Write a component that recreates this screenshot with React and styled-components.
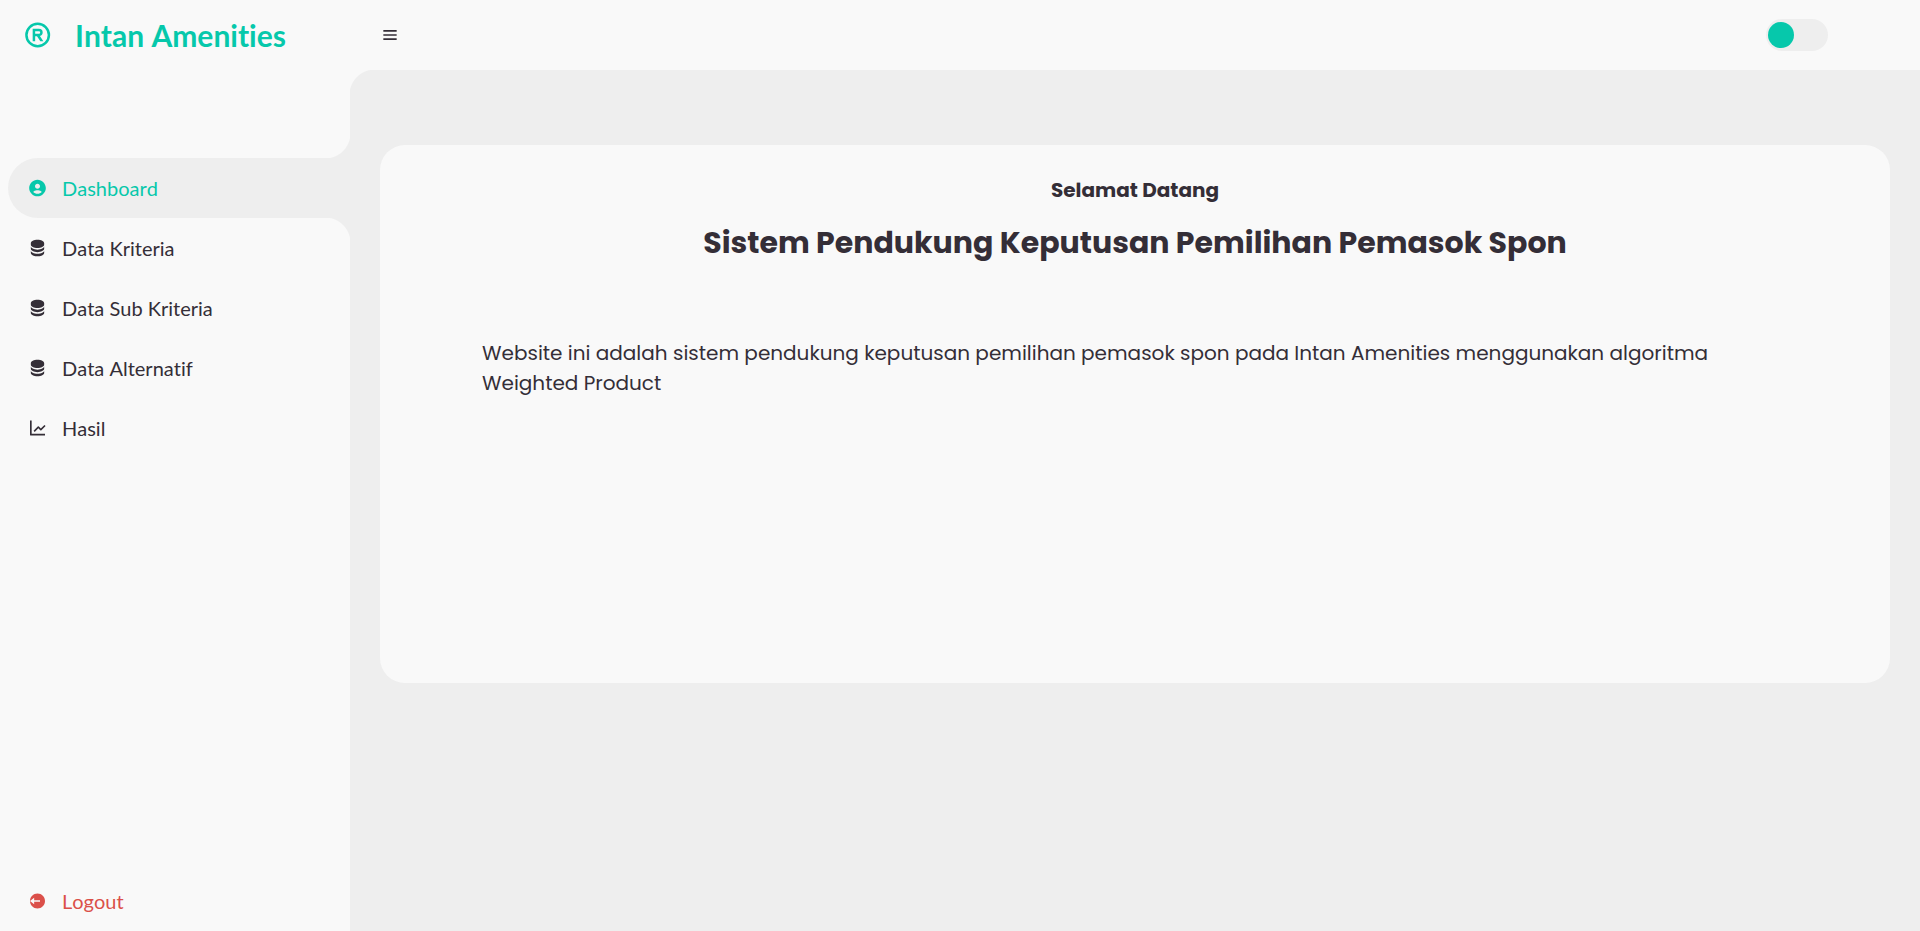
import React, { useState } from "react";
import styled, { createGlobalStyle, ThemeProvider, css } from "styled-components";
import {
  BiRegistered,
  BiMenu,
  BiSolidUserCircle,
  BiSolidData,
  BiLineChart,
  BiSolidLogOutCircle,
} from "react-icons/bi";

const theme = {
  light: "#f9f9f9",
  grey: "#eeeeee",
  dark: "#342e37",
  accent: "#06c8ab",
  red: "#db504a",
  nav: '"Lato", sans-serif',
  body: '"Poppins", "Inter", sans-serif',
};

const GlobalStyle = createGlobalStyle`
  *, *::before, *::after { box-sizing: border-box; }
  body {
    margin: 0;
    background: ${theme.grey};
    color: ${theme.dark};
    font-family: ${theme.body};
  }
  h1, h2, p, ul { margin: 0; padding: 0; }
  ul { list-style: none; }
`;

const Layout = styled.div`
  display: grid;
  grid-template-columns: 350px minmax(0, 1fr);
  min-height: 100vh;
`;

const Sidebar = styled.aside`
  position: sticky;
  top: 0;
  display: flex;
  flex-direction: column;
  height: 100vh;
  background: ${({ theme }) => theme.light};
  font-family: ${({ theme }) => theme.nav};
  font-variant-ligatures: none;
  font-kerning: none;
`;

const Brand = styled.a`
  display: flex;
  align-items: center;
  height: 70px;
  margin-bottom: 88px;
  color: ${({ theme }) => theme.accent};
  font-size: 30px;
  font-weight: 700;
  text-decoration: none;

  svg {
    flex: 0 0 75px;
  }
`;

const Menu = styled.ul`
  margin-left: 8px;
`;

const LogoutMenu = styled(Menu)`
  margin-top: auto;
`;

const activeItem = css`
  background: ${({ theme }) => theme.grey};

  &::before,
  &::after {
    content: "";
    position: absolute;
    right: 0;
    width: 25px;
    height: 25px;
    pointer-events: none;
  }
  &::before {
    bottom: 100%;
    background: radial-gradient(circle at 0 0, transparent 25px, ${({ theme }) => theme.grey} 26px);
  }
  &::after {
    top: 100%;
    background: radial-gradient(circle at 0 100%, transparent 25px, ${({ theme }) => theme.grey} 26px);
  }
`;

const MenuItem = styled.li`
  position: relative;
  height: 60px;
  padding: 5px;
  border-radius: 30px 0 0 30px;
  ${({ $active }) => $active && activeItem}
`;

const MenuLink = styled.a`
  display: flex;
  align-items: center;
  height: 100%;
  color: ${({ theme, $tone }) => theme[$tone]};
  font-size: 20px;
  text-decoration: none;

  svg {
    flex: 0 0 49px;
  }
`;

const Content = styled.div`
  display: flex;
  flex-direction: column;
`;

const Navbar = styled.nav`
  position: relative;
  display: flex;
  align-items: center;
  justify-content: space-between;
  height: 70px;
  padding: 0 92px 0 30px;
  background: ${({ theme }) => theme.light};

  &::after {
    content: "";
    position: absolute;
    top: 100%;
    left: 0;
    width: 25px;
    height: 25px;
    background: radial-gradient(circle at 100% 100%, transparent 25px, ${({ theme }) => theme.light} 26px);
  }
`;

const MenuButton = styled.button`
  display: flex;
  padding: 0;
  border: 0;
  background: none;
  color: inherit;
  cursor: pointer;
`;

const ModeSwitch = styled.input`
  appearance: none;
  display: flex;
  width: 62px;
  height: 32px;
  margin: 0;
  padding: 3px 2px;
  border-radius: 16px;
  background: ${({ theme }) => theme.grey};
  cursor: pointer;

  &::before {
    content: "";
    width: 26px;
    height: 26px;
    border-radius: 50%;
    background: ${({ theme }) => theme.accent};
  }
  &:checked {
    justify-content: flex-end;
  }
`;

const Main = styled.main`
  padding: 75px 30px 45px;
`;

const Card = styled.section`
  min-height: 538px;
  padding: 30px 102px;
  border-radius: 25px;
  background: ${({ theme }) => theme.light};
`;

const Greeting = styled.h2`
  font-size: 20px;
  line-height: 30px;
  font-weight: 700;
  text-align: center;
`;

const Title = styled.h1`
  margin-top: 15px;
  font-size: 30px;
  line-height: 45px;
  font-weight: 700;
  text-align: center;
`;

const Description = styled.p`
  margin-top: 73px;
  font-size: 20px;
  line-height: 30px;
`;

const items = [
  { label: "Dashboard", icon: BiSolidUserCircle, active: true },
  { label: "Data Kriteria", icon: BiSolidData },
  { label: "Data Sub Kriteria", icon: BiSolidData },
  { label: "Data Alternatif", icon: BiSolidData },
  { label: "Hasil", icon: BiLineChart },
];

export default function App() {
  const [dark, setDark] = useState(false);

  return (
    <ThemeProvider theme={theme}>
      <GlobalStyle />
      <Layout>
        <Sidebar>
          <Brand href="#">
            <BiRegistered size={30} />
            Intan Amenities
          </Brand>
          <Menu>
            {items.map(({ label, icon: Icon, active }) => (
              <MenuItem key={label} $active={active}>
                <MenuLink href="#" $tone={active ? "accent" : "dark"}>
                  <Icon size={20} />
                  {label}
                </MenuLink>
              </MenuItem>
            ))}
          </Menu>
          <LogoutMenu>
            <MenuItem>
              <MenuLink href="#" $tone="red">
                <BiSolidLogOutCircle size={20} />
                Logout
              </MenuLink>
            </MenuItem>
          </LogoutMenu>
        </Sidebar>
        <Content>
          <Navbar>
            <MenuButton type="button" aria-label="Menu">
              <BiMenu size={20} />
            </MenuButton>
            <ModeSwitch
              type="checkbox"
              aria-label="Mode"
              checked={dark}
              onChange={(e) => setDark(e.target.checked)}
            />
          </Navbar>
          <Main>
            <Card>
              <Greeting>Selamat Datang</Greeting>
              <Title>Sistem Pendukung Keputusan Pemilihan Pemasok Spon</Title>
              <Description>
                Website ini adalah sistem pendukung keputusan pemilihan pemasok spon pada Intan
                Amenities menggunakan algoritma Weighted Product
              </Description>
            </Card>
          </Main>
        </Content>
      </Layout>
    </ThemeProvider>
  );
}
